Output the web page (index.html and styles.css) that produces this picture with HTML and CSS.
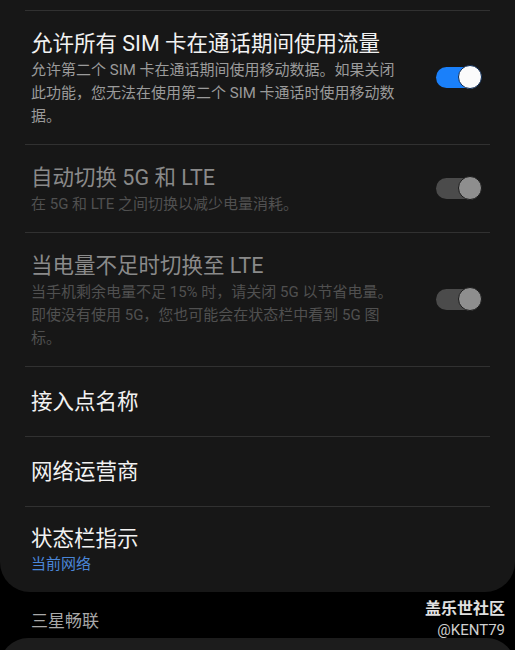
FILE: index.html
```html
<!DOCTYPE html>
<html lang="zh-CN">
<head>
    <meta charset="UTF-8">
    <meta name="viewport" content="width=device-width, initial-scale=1.0">
    <title>移动网络</title>
    <link rel="stylesheet" href="styles.css">
</head>
<body>

<div class="panel">
    <div class="row">
        <div class="text">
            <div class="title">允许所有 SIM 卡在通话期间使用流量</div>
            <div class="sub">允许第二个 SIM 卡在通话期间使用移动数据。如果关闭此功能，您无法在使用第二个 SIM 卡通话时使用移动数据。</div>
        </div>
        <span class="switch on"></span>
    </div>

    <div class="row disabled">
        <div class="text">
            <div class="title">自动切换 5G 和 LTE</div>
            <div class="sub">在 5G 和 LTE 之间切换以减少电量消耗。</div>
        </div>
        <span class="switch"></span>
    </div>

    <div class="row disabled">
        <div class="text">
            <div class="title">当电量不足时切换至 LTE</div>
            <div class="sub">当手机剩余电量不足 15% 时，请关闭 5G 以节省电量。即使没有使用 5G，您也可能会在状态栏中看到 5G 图标。</div>
        </div>
        <span class="switch"></span>
    </div>

    <div class="row simple">
        <div class="title">接入点名称</div>
    </div>

    <div class="row simple">
        <div class="title">网络运营商</div>
    </div>

    <div class="row last">
        <div class="text">
            <div class="title">状态栏指示</div>
            <div class="link">当前网络</div>
        </div>
    </div>
</div>

<div class="section">三星畅联</div>
<div class="panel-next"></div>

<div class="watermark">
    <div class="wm-name">盖乐世社区</div>
    <div class="wm-user">@KENT79</div>
</div>

</body>
</html>
```

FILE: styles.css
```css
body {
    margin: 0;
    background: #000;
    font-family: Roboto, "Noto Sans CJK SC", sans-serif;
    color: #f2f2f2;
    overflow: hidden;
    height: 650px;
    position: relative;
}
.panel {
    background: #171717;
    padding: 10px 25px 0;
    border-radius: 0 0 30px 30px;
}
.row {
    display: flex;
    align-items: center;
    gap: 31px;
    border-top: 1px solid #313131;
    padding: 19px 8px 16px 6px;
}
.text {
    flex: 1;
}
.title {
    font-size: 21.5px;
    line-height: 28px;
}
.sub {
    font-size: 15px;
    line-height: 23px;
    margin-top: 1px;
    color: #9b9b9b;
}
.disabled .title {
    color: #8a8a8a;
}
.disabled .sub {
    color: #505050;
}
.row.simple {
    padding-top: 21px;
    padding-bottom: 20px;
}
.row.last {
    padding-top: 18px;
    padding-bottom: 16px;
}
.link {
    font-size: 15px;
    line-height: 23px;
    color: #4a86d8;
}
.switch {
    position: relative;
    width: 46px;
    height: 25px;
    flex: none;
    margin-bottom: 4px;
}
.switch::before {
    content: "";
    position: absolute;
    left: 0;
    top: 2px;
    width: 43px;
    height: 21px;
    border-radius: 11px;
    background: #4b4b4b;
}
.switch::after {
    content: "";
    position: absolute;
    right: 0;
    top: 0;
    width: 22px;
    height: 22px;
    border-radius: 50%;
    background: #8e8e8e;
    border: 1.5px solid #1b1b1b;
}
.switch.on::before {
    background: #1a80fa;
}
.switch.on::after {
    background: #fbfbfb;
    border-color: #0b2a55;
}
.section {
    font-size: 17px;
    line-height: 24px;
    color: #a8a8a8;
    padding: 17px 31px 5px;
}
.panel-next {
    height: 30px;
    background: #1c1c1c;
    border-radius: 28px 28px 0 0;
}
.watermark {
    position: absolute;
    right: 10px;
    top: 598px;
    text-align: right;
}
.wm-name {
    font-size: 16px;
    font-weight: bold;
    line-height: 22px;
    color: #e0e0e0;
}
.wm-user {
    font-size: 15px;
    line-height: 20px;
    color: #cfcfcf;
}
```
